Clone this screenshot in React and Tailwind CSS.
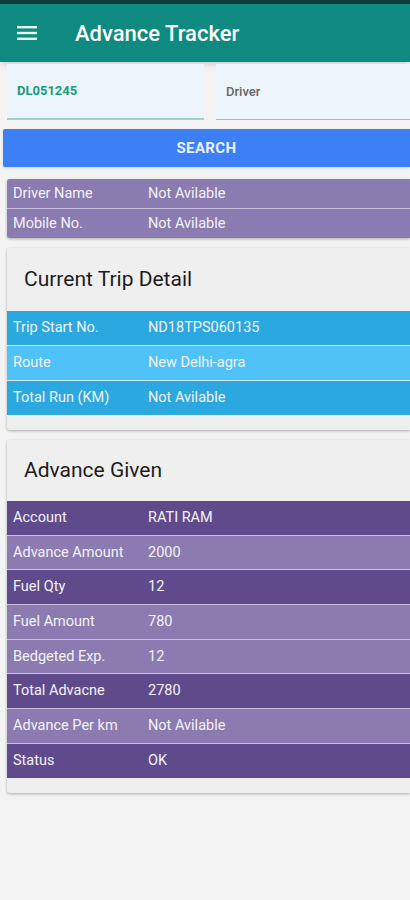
import React from "react";

const driverRows = [
  ["Driver Name", "Not Avilable"],
  ["Mobile No.", "Not Avilable"],
];

const tripRows = [
  ["Trip Start No.", "ND18TPS060135", "bg-[#2aa8df]"],
  ["Route", "New Delhi-agra", "bg-[#4fc3f7]"],
  ["Total Run (KM)", "Not Avilable", "bg-[#2aa8df]"],
];

const advRows = [
  ["Account", "RATI RAM", "bg-[#5f4b8b]"],
  ["Advance Amount", "2000", "bg-[#8b7bb0]"],
  ["Fuel Qty", "12", "bg-[#5f4b8b]"],
  ["Fuel Amount", "780", "bg-[#8b7bb0]"],
  ["Bedgeted Exp.", "12", "bg-[#8b7bb0]"],
  ["Total Advacne", "2780", "bg-[#5f4b8b]"],
  ["Advance Per km", "Not Avilable", "bg-[#8b7bb0]"],
  ["Status", "OK", "bg-[#5f4b8b]"],
];

function Row({ label, value, bg, h }) {
  return (
    <div className={`flex items-center ${bg} ${h} text-[14.5px] text-[#f4f2f8]`}>
      <div className="w-[141px] pl-[6px]">{label}</div>
      <div>{value}</div>
    </div>
  );
}

export default function App() {
  return (
    <div
      className="w-[410px] h-[900px] bg-[#f3f3f3] overflow-hidden"
      style={{ fontFamily: "Roboto, 'Noto Sans', sans-serif" }}
    >
      <div className="h-[4px] bg-[#0b3d3a]" />
      <div className="h-[58px] bg-[#0f8a80] flex items-center shadow-md">
        <svg width="20" height="14" viewBox="0 0 20 14" className="ml-[17px]">
          <rect x="0" y="0" width="20" height="2.4" fill="#e8f5f3" />
          <rect x="0" y="5.8" width="20" height="2.4" fill="#e8f5f3" />
          <rect x="0" y="11.6" width="20" height="2.4" fill="#e8f5f3" />
        </svg>
        <div className="ml-[38px] text-white text-[22px] font-medium">Advance Tracker</div>
      </div>

      <div className="flex gap-[12px] pl-[7px] pt-[2px] h-[58px]">
        <div className="w-[197px] bg-[#eef5fa] border-b-[2px] border-[#9fd3cc] flex items-center pl-[10px]">
          <span className="text-[13px] font-bold text-[#1a9a7e]">DL051245</span>
        </div>
        <div className="flex-1 bg-[#eef5fa] border-b-[1px] border-[#a9b8bc] flex items-center pl-[10px]">
          <span className="text-[13px] font-medium text-[#666]">Driver</span>
        </div>
      </div>

      <div className="mt-[9px] ml-[3px] h-[38px] bg-[#3d7ff5] rounded-l-[2px] shadow-sm flex items-center justify-center">
        <span className="text-[15px] font-bold tracking-wide text-[#e8efff]">SEARCH</span>
      </div>

      <div className="mt-[12px] ml-[7px] rounded-l-[3px] overflow-hidden shadow-[0_1px_3px_rgba(0,0,0,0.3)] bg-[#c9c1dd] flex flex-col gap-[1px]">
        {driverRows.map(([l, v]) => (
          <Row key={l} label={l} value={v} bg="bg-[#8a7bb1]" h="h-[29px]" />
        ))}
      </div>

      <div className="mt-[10px] ml-[7px] bg-[#efefef] rounded-l-[3px] shadow-[0_1px_3px_rgba(0,0,0,0.3)] pb-[15px]">
        <div className="h-[63px] flex items-center pl-[17px] text-[21px] text-[#1c1c1c]">Current Trip Detail</div>
        <div className="flex flex-col gap-[1px] bg-[#cfeaf7]">
          {tripRows.map(([l, v, bg]) => (
            <Row key={l} label={l} value={v} bg={bg} h="h-[34px]" />
          ))}
        </div>
      </div>

      <div className="mt-[10px] ml-[7px] bg-[#efefef] rounded-l-[3px] shadow-[0_1px_3px_rgba(0,0,0,0.3)] pb-[15px]">
        <div className="h-[61px] flex items-center pl-[17px] text-[21px] text-[#1c1c1c]">Advance Given</div>
        <div className="flex flex-col gap-[1px] bg-[#c9c1dd]">
          {advRows.map(([l, v, bg]) => (
            <Row key={l} label={l} value={v} bg={bg} h="h-[33.7px]" />
          ))}
        </div>
      </div>
    </div>
  );
}
